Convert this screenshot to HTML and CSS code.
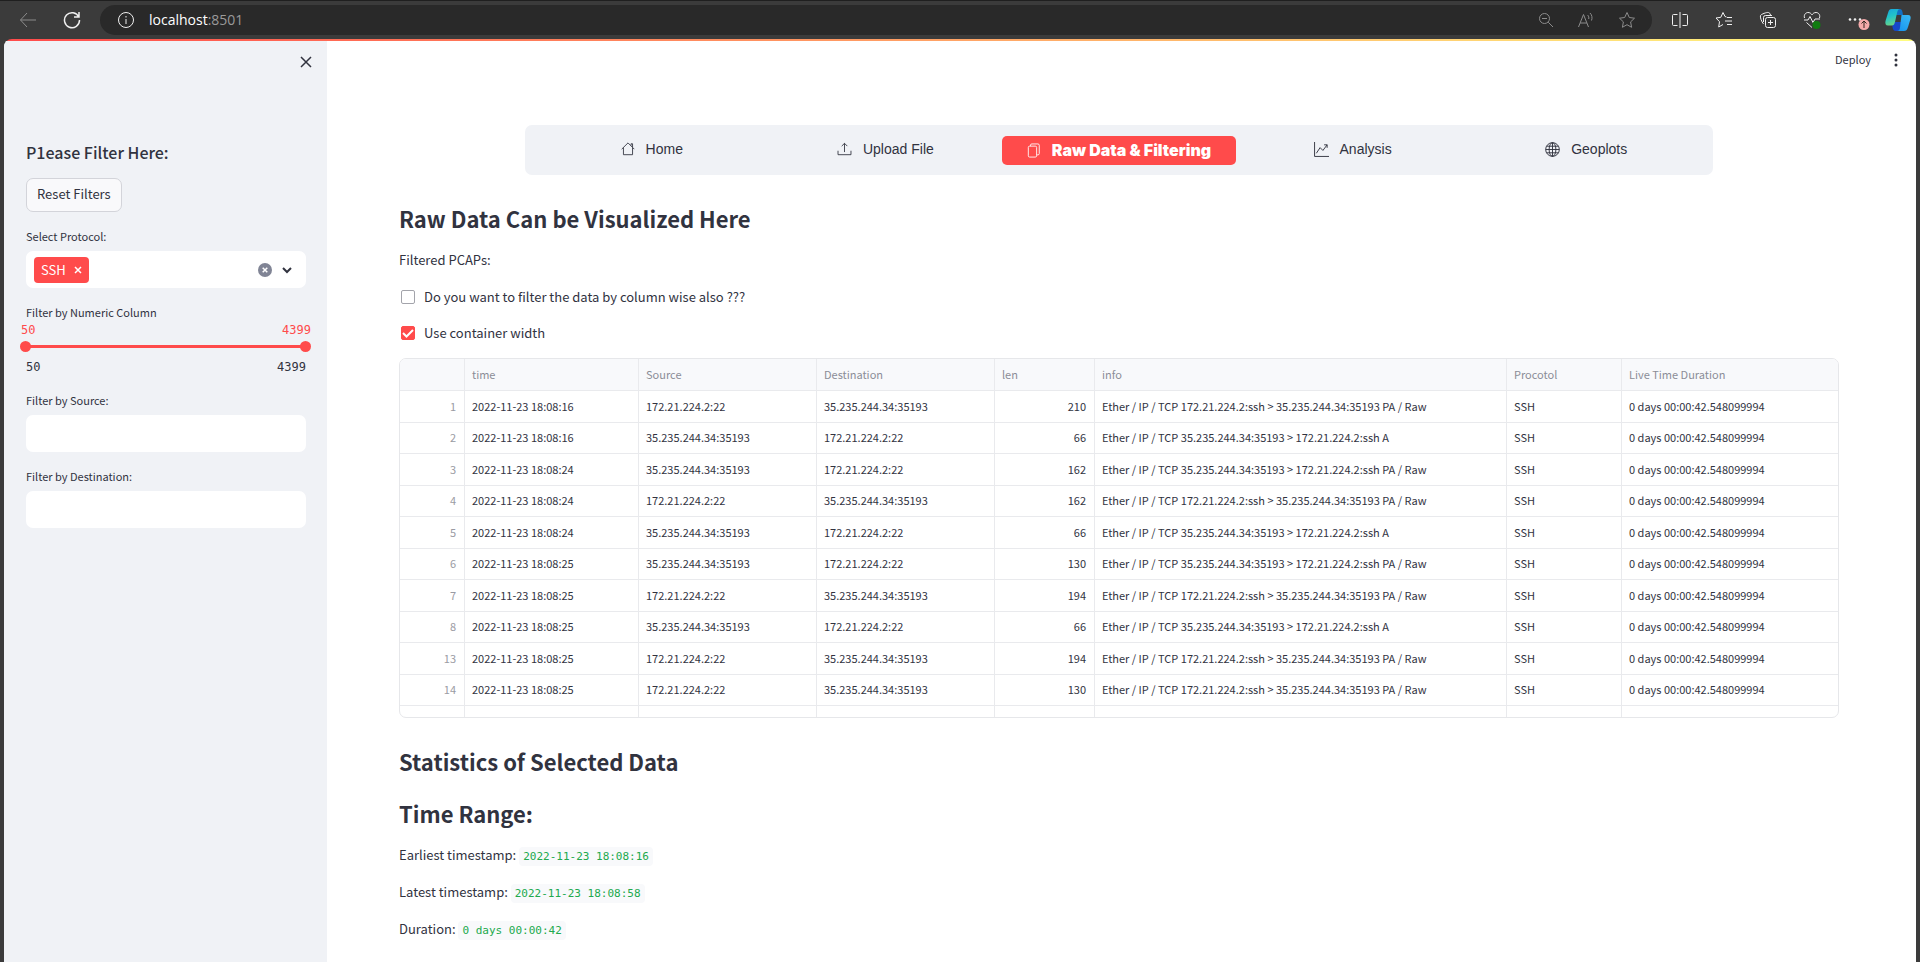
FILE: index.html
```html
<!DOCTYPE html>
<html lang="en">
<head>
<meta charset="utf-8">
<title>Raw Data &amp; Filtering</title>
<link rel="stylesheet" href="styles.css">
</head>
<body>
<header class="browser">
  <button class="tool dim" aria-label="Back"><svg width="18" height="18" viewBox="0 0 18 18"><path d="M17 9H1.500M8 2 1.500 9 8 16"/></svg></button>
  <button class="tool" aria-label="Refresh"><svg width="18" height="18" viewBox="0 0 18 18"><path class="bold" d="M15.800 6A7.500 7.500 0 1 0 16.500 9M16 1v5h-5"/></svg></button>
  <div class="address">
    <svg class="info" width="18" height="18" viewBox="0 0 18 18"><circle cx="9" cy="9" r="7.500"/><path d="M9 8v5M9 5v1.500"/></svg>
    <span class="url">localhost<span class="port">:8501</span></span>
    <button class="tool dim" aria-label="Zoom out"><svg width="16" height="16" viewBox="0 0 16 16"><circle cx="6.500" cy="6.500" r="5"/><path d="m10.200 10.200 4.800 4.800M4 6.500h5"/></svg></button>
    <button class="tool dim" aria-label="Read aloud"><svg width="18" height="18" viewBox="0 0 18 18"><path d="M1.500 16 6.500 3.500 11.500 16M3.200 12h6.600M10.500 4c1.200 1 1.600 2.500 1.200 4M13 2c2 1.800 2.500 5 1.500 7.500"/></svg></button>
    <button class="tool dim" aria-label="Add to favorites"><svg width="18" height="18" viewBox="0 0 18 18"><path d="m9 1.500 2.300 5 5.200.7-3.900 3.700 1 5.400L9 13.700l-4.600 2.600 1-5.400L1.500 7.200l5.200-.7z"/></svg></button>
  </div>
  <div class="tools">
    <button class="tool" aria-label="Split screen"><svg width="18" height="18" viewBox="0 0 18 18"><path d="M6.500 3.500h-4a1 1 0 0 0-1 1v9a1 1 0 0 0 1 1h4M11.500 3.500h4a1 1 0 0 1 1 1v9a1 1 0 0 1-1 1h-4M9 1v16"/></svg></button>
    <button class="tool" aria-label="Favorites"><svg width="18" height="18" viewBox="0 0 18 18"><path d="M11.500 6 10 5.500 8 1.500l-2.200 4.800-4.800.7 3.500 3.700-.8 5.300 4.300-2.500M12 6.500h5M10 10h7M12 13.500h5"/></svg></button>
    <button class="tool" aria-label="Collections"><svg width="18" height="18" viewBox="0 0 18 18"><rect x="6.500" y="6.500" width="10" height="10" rx="2"/><path d="M11.500 9v5M9 11.500h5M4.500 13C2.500 10.500.8 6 1.500 4.500c.3-1.200 6.500-3.500 8-3 1 .3 1.500 1 2 2.500M4.500 11V6.500a2 2 0 0 1 2-2H13"/></svg></button>
    <button class="tool" aria-label="Browser essentials"><svg width="18" height="18" viewBox="0 0 18 18"><path d="M1.500 7C.5 3.500 3 1.500 5 1.500c2 0 3 1 4 2.300 1-1.300 2-2.300 4-2.300 2.300 0 4.500 2 3.500 5.500M1 9h4l2-3.500 3 6L12 8h5M3.500 11.500 9 16.500"/><circle class="green" cx="13.500" cy="14" r="4"/></svg></button>
    <button class="tool" aria-label="Settings and more"><svg width="24" height="20" viewBox="0 0 24 20"><g class="solid"><circle cx="3" cy="9.500" r="1.300"/><circle cx="8" cy="9.500" r="1.300"/><circle cx="13" cy="9.500" r="1.300"/></g><circle class="pink" cx="17" cy="14.500" r="5.500"/><path class="arrow" d="M17 18v-7M14.500 13.500 17 11l2.500 2.500"/></svg></button>
    <button class="tool copilot" aria-label="Copilot"><svg width="26" height="24" viewBox="0 0 26 24">
      <defs><linearGradient id="ca" x1="0" y1="0" x2="0.300" y2="1"><stop offset="0" stop-color="#16a5e0"/><stop offset="0.500" stop-color="#22c3c8"/><stop offset="1" stop-color="#66d48b"/></linearGradient><linearGradient id="cb" x1="0" y1="1" x2="0.700" y2="0"><stop offset="0" stop-color="#1593ee"/><stop offset="1" stop-color="#36b5f5"/></linearGradient></defs>
      <path class="fill" fill="#1747c9" d="M7 14h10l-3 9h-3c-2.500 0-3-1.500-3.500-4z"/>
      <path class="fill" fill="#126fc4" d="M10 1h5c2 0 2.500 2 3 6h-8z"/>
      <path class="fill" fill="url(#ca)" d="M6.500 1H15c-2 0-2.500 2-3 4l-2 9c-.6 2.500-1.500 3.500-3 3.500H3c-2.500 0-3-2-2.500-4.500L3 5C3.800 2.500 4.500 1 6.500 1z"/>
      <path class="fill" fill="url(#cb)" d="M16.500 7H23c2.500 0 3 2 2.500 4L23 19c-1 3-2 4-4 4h-7c2 0 2.500-1.500 3-3.500z"/></svg></button>
  </div>
</header>

<div class="page">
  <aside class="sidebar">
    <button class="close" aria-label="Close sidebar"><svg width="12" height="12" viewBox="0 0 12 12"><path d="m1 1 10 10M11 1 1 11"/></svg></button>
    <h3 class="side-title">P1ease Filter Here:</h3>
    <button class="reset">Reset Filters</button>
    <div class="field">
      <span class="label" id="protocol">Select Protocol:</span>
      <div class="multi" role="group" aria-labelledby="protocol">
        <span class="tag">SSH <button aria-label="Remove SSH"><svg width="8" height="8" viewBox="0 0 8 8"><path d="m1 1 6 6M7 1 1 7"/></svg></button></span>
        <button class="clear" aria-label="Clear all"><svg width="14" height="14" viewBox="0 0 14 14"><circle cx="7" cy="7" r="7"/><path d="m4.700 4.700 4.600 4.600M9.300 4.700 4.700 9.300"/></svg></button>
        <button class="chev" aria-label="Open"><svg width="10" height="8" viewBox="0 0 10 8"><path d="m1 2 4 4 4-4"/></svg></button>
      </div>
    </div>
    <div class="field slider" role="group" aria-labelledby="numeric">
      <span class="label" id="numeric">Filter by Numeric Column</span>
      <div class="values current"><span>50</span><span>4399</span></div>
      <div class="track">
        <input type="range" min="50" max="4399" value="50" aria-label="Minimum">
        <input type="range" min="50" max="4399" value="4399" aria-label="Maximum">
      </div>
      <div class="values"><span>50</span><span>4399</span></div>
    </div>
    <div class="field">
      <label class="label" for="src">Filter by Source:</label>
      <input class="text" id="src" type="text">
    </div>
    <div class="field">
      <label class="label" for="dst">Filter by Destination:</label>
      <input class="text" id="dst" type="text">
    </div>
  </aside>

  <main class="main">
    <div class="topbar">
      <button class="deploy">Deploy</button>
      <button class="kebab" aria-label="Menu"><svg width="4" height="14" viewBox="0 0 4 14"><circle cx="2" cy="2" r="1.500"/><circle cx="2" cy="7" r="1.500"/><circle cx="2" cy="12" r="1.500"/></svg></button>
    </div>
    <div class="content">
      <nav class="nav">
        <a href="#"><svg width="14" height="14" viewBox="0 0 16 16"><path d="M.8 8.200 8 1l7.200 7.200M2.800 6.500v8h10.400v-8M11.500 4V2h1.700v4"/></svg>Home</a>
        <a href="#"><svg width="15" height="14" viewBox="0 0 16 16"><path d="M.6 10v4.500h14.800V10M8 11.500V1.500M4.800 4.700 8 1.500l3.200 3.200"/></svg>Upload File</a>
        <a href="#" class="active" aria-current="page"><svg width="14" height="15" viewBox="0 0 16 16"><rect x="1.500" y="3" width="9.500" height="12.500" rx="1.500"/><path d="M4 3V2A1.500 1.500 0 0 1 5.500.5h7A1.500 1.500 0 0 1 14 2v9.500a1.500 1.500 0 0 1-1.500 1.500H11"/></svg>Raw Data &amp; Filtering</a>
        <a href="#"><svg width="15" height="15" viewBox="0 0 16 16"><path d="M.6 0v15.400H16M2.500 12 6.500 6l3 3L14 3M10.800 3H14v3.200"/></svg>Analysis</a>
        <a href="#"><svg width="15" height="15" viewBox="0 0 16 16"><circle cx="8" cy="8" r="7.300"/><ellipse cx="8" cy="8" rx="3.600" ry="7.300"/><path d="M8 .7v14.600M.7 8h14.600M1.800 4.500h12.400M1.800 11.500h12.400"/></svg>Geoplots</a>
      </nav>
      <h2>Raw Data Can be Visualized Here</h2>
      <p>Filtered PCAPs:</p>
      <label class="check"><input type="checkbox">Do you want to filter the data by column wise also ???</label>
      <label class="check"><input type="checkbox" checked>Use container width</label>
      <div class="frame">
        <table>
          <colgroup><col class="c-idx"><col class="c-time"><col class="c-addr"><col class="c-addr"><col class="c-len"><col><col class="c-proto"><col class="c-live"></colgroup>
          <thead><tr><th></th><th>time</th><th>Source</th><th>Destination</th><th>len</th><th>info</th><th>Procotol</th><th>Live Time Duration</th></tr></thead>
          <tbody>
            <tr><td>1</td><td>2022-11-23 18:08:16</td><td>172.21.224.2:22</td><td>35.235.244.34:35193</td><td>210</td><td>Ether / IP / TCP 172.21.224.2:ssh &gt; 35.235.244.34:35193 PA / Raw</td><td>SSH</td><td>0 days 00:00:42.548099994</td></tr>
            <tr><td>2</td><td>2022-11-23 18:08:16</td><td>35.235.244.34:35193</td><td>172.21.224.2:22</td><td>66</td><td>Ether / IP / TCP 35.235.244.34:35193 &gt; 172.21.224.2:ssh A</td><td>SSH</td><td>0 days 00:00:42.548099994</td></tr>
            <tr><td>3</td><td>2022-11-23 18:08:24</td><td>35.235.244.34:35193</td><td>172.21.224.2:22</td><td>162</td><td>Ether / IP / TCP 35.235.244.34:35193 &gt; 172.21.224.2:ssh PA / Raw</td><td>SSH</td><td>0 days 00:00:42.548099994</td></tr>
            <tr><td>4</td><td>2022-11-23 18:08:24</td><td>172.21.224.2:22</td><td>35.235.244.34:35193</td><td>162</td><td>Ether / IP / TCP 172.21.224.2:ssh &gt; 35.235.244.34:35193 PA / Raw</td><td>SSH</td><td>0 days 00:00:42.548099994</td></tr>
            <tr><td>5</td><td>2022-11-23 18:08:24</td><td>35.235.244.34:35193</td><td>172.21.224.2:22</td><td>66</td><td>Ether / IP / TCP 35.235.244.34:35193 &gt; 172.21.224.2:ssh A</td><td>SSH</td><td>0 days 00:00:42.548099994</td></tr>
            <tr><td>6</td><td>2022-11-23 18:08:25</td><td>35.235.244.34:35193</td><td>172.21.224.2:22</td><td>130</td><td>Ether / IP / TCP 35.235.244.34:35193 &gt; 172.21.224.2:ssh PA / Raw</td><td>SSH</td><td>0 days 00:00:42.548099994</td></tr>
            <tr><td>7</td><td>2022-11-23 18:08:25</td><td>172.21.224.2:22</td><td>35.235.244.34:35193</td><td>194</td><td>Ether / IP / TCP 172.21.224.2:ssh &gt; 35.235.244.34:35193 PA / Raw</td><td>SSH</td><td>0 days 00:00:42.548099994</td></tr>
            <tr><td>8</td><td>2022-11-23 18:08:25</td><td>35.235.244.34:35193</td><td>172.21.224.2:22</td><td>66</td><td>Ether / IP / TCP 35.235.244.34:35193 &gt; 172.21.224.2:ssh A</td><td>SSH</td><td>0 days 00:00:42.548099994</td></tr>
            <tr><td>13</td><td>2022-11-23 18:08:25</td><td>172.21.224.2:22</td><td>35.235.244.34:35193</td><td>194</td><td>Ether / IP / TCP 172.21.224.2:ssh &gt; 35.235.244.34:35193 PA / Raw</td><td>SSH</td><td>0 days 00:00:42.548099994</td></tr>
            <tr><td>14</td><td>2022-11-23 18:08:25</td><td>172.21.224.2:22</td><td>35.235.244.34:35193</td><td>130</td><td>Ether / IP / TCP 172.21.224.2:ssh &gt; 35.235.244.34:35193 PA / Raw</td><td>SSH</td><td>0 days 00:00:42.548099994</td></tr>
            <tr class="rest"><td></td><td></td><td></td><td></td><td></td><td></td><td></td><td></td></tr>
          </tbody>
        </table>
      </div>
      <h2>Statistics of Selected Data</h2>
      <h2 class="sub">Time Range:</h2>
      <p>Earliest timestamp: <code>2022-11-23 18:08:16</code></p>
      <p>Latest timestamp: <code>2022-11-23 18:08:58</code></p>
      <p>Duration: <code>0 days 00:00:42</code></p>
    </div>
  </main>
</div>
</body>
</html>
```
FILE: styles.css
```css
* { box-sizing: border-box; }
body {
  margin: 0;
  min-height: 100vh;
  display: flex;
  flex-direction: column;
  background: #3b3b3b;
  color: #31333f;
  font: 13px/24px "Noto Sans CJK SC", "Noto Sans", sans-serif;
}
button { border: 0; padding: 0; background: none; color: inherit; font: inherit; }
svg { display: block; fill: none; stroke: currentColor; }
h2, h3, p { margin: 0; }

/* browser toolbar */
.browser {
  display: flex;
  align-items: center;
  height: 39px;
  padding: 0 9px 0 19px;
  border-top: 1px solid #1f1f1f;
  color: #f0f0f0;
}
.browser .tool { flex: none; }
.browser .tool + .tool { margin-left: 26px; }
.browser .dim { color: #8c8c8c; }
.browser .bold { stroke-width: 1.5; }
.address {
  flex: 1;
  display: flex;
  align-items: center;
  height: 30px;
  margin: 0 19px 0 19px;
  padding: 0 16px 0 17px;
  border-radius: 15px;
  background: #292929;
}
.address .tool + .tool { margin-left: 23px; }
.url { flex: 1; margin-left: 14px; font: 14px/24px "Open Sans", "Noto Sans", sans-serif; color: #fff; }
.port { color: #9a9a9a; }
.tools { display: flex; align-items: center; }
.tools .copilot.copilot { margin-left: 14px; }
.green { fill: #107c10; stroke: none; }
.solid { fill: #f0f0f0; stroke: none; }
.pink { fill: #f4a9a9; stroke: none; }
.arrow { stroke: #33261f; }
.fill { stroke: none; }

/* page surface */
.page {
  flex: 1;
  display: flex;
  margin: 0 4px;
  border-radius: 8px 8px 0 0;
  overflow: hidden;
  background: linear-gradient(90deg, #ff4b4b, #fffd80) top / 100% 2px no-repeat #fff;
}

/* sidebar */
.sidebar {
  width: 323px;
  margin-top: 2px;
  padding: 15px 21px 0 22px;
  background: #f0f2f6;
}
.close { display: block; margin: 0 -6px 0 auto; }
.close svg { stroke-width: 1.5; }
.side-title { margin: 72px 0 14px; font-size: 16px; line-height: 24px; font-weight: 500; }
.reset {
  display: block;
  height: 34px;
  padding: 0 10px 2px;
  border: 1px solid #d3d4da;
  border-radius: 7px;
  background: #f9f9fb;
}
.field { margin-top: 15px; }
.label { display: block; margin-bottom: 6px; font-size: 11px; line-height: 18px; }
.multi {
  display: flex;
  align-items: center;
  height: 37px;
  padding: 0 14px 0 8px;
  border-radius: 7px;
  background: #fff;
}
.tag {
  display: flex;
  align-items: center;
  gap: 8px;
  height: 26px;
  padding: 0 7px;
  margin-right: auto;
  border-radius: 4px;
  background: #ff4b4b;
  color: #fff;
}
.tag svg { stroke-width: 1.5; }
.clear circle { fill: #808495; stroke: none; }
.clear path { stroke: #fff; stroke-width: 1.5; }
.chev { margin-left: 10px; }
.chev svg { stroke-width: 2; }
.slider .label { margin: 0; }
.values {
  display: flex;
  justify-content: space-between;
  font: 12px/18px "DejaVu Sans Mono", monospace;
}
.values.current { margin: 0 -5px; color: #ff4b4b; }
.track {
  position: relative;
  height: 14px;
  margin-bottom: 5px;
  background: linear-gradient(#ff4b4b, #ff4b4b) center / 100% 3px no-repeat;
}
.track input {
  position: absolute;
  inset: 0 -5px 0 -6px;
  margin: 0;
  appearance: none;
  background: none;
  pointer-events: none;
}
.track input::-webkit-slider-thumb {
  appearance: none;
  width: 11px;
  height: 11px;
  border-radius: 50%;
  background: #ff4b4b;
  pointer-events: auto;
}
.text {
  display: block;
  width: 100%;
  height: 37px;
  padding: 0 10px;
  border: 0;
  border-radius: 7px;
  background: #fff;
  font: inherit;
}

/* main column */
.main { flex: 1; min-width: 0; }
.topbar {
  display: flex;
  justify-content: flex-end;
  align-items: center;
  gap: 23px;
  height: 42px;
  padding-right: 18px;
}
.deploy { padding-bottom: 2px; font-size: 11px; }
.kebab svg { fill: currentColor; stroke: none; }
.content { padding: 44px 77px 20px 72px; }
.nav {
  display: grid;
  grid-template-columns: repeat(5, 1fr);
  width: 82.5%;
  min-width: 820px;
  margin: 0 auto;
  padding: 11px 10px 10px;
  border-radius: 7px;
  background: #f0f2f6;
}
.nav a {
  display: flex;
  justify-content: center;
  align-items: center;
  gap: 11px;
  height: 29px;
  padding-bottom: 3px;
  border-radius: 5px;
  color: #31333f;
  font: 14px/20px "Liberation Sans", sans-serif;
  text-decoration: none;
}
.nav .active { padding-bottom: 1px; background: #ff4b4b; color: #fff; font: 900 16px/20px Inter, sans-serif; }
h2 { margin-top: 28px; font-size: 22px; line-height: 30px; font-weight: 700; }
h2.sub { margin-top: 22px; }
h2 + p { margin-top: 15px; }
p { margin-top: 13px; }
.check { display: flex; align-items: center; gap: 9px; margin-top: 13px; }
.check + .check { margin-top: 12px; }
.check input {
  appearance: none;
  width: 14px;
  height: 14px;
  margin: 0 0 0 2px;
  border: 1px solid #a3a4ab;
  border-radius: 2px;
}
.check input:checked {
  border-color: #ff4b4b;
  background: #ff4b4b url("data:image/svg+xml,%3Csvg xmlns='http://www.w3.org/2000/svg' viewBox='0 0 14 14'%3E%3Cpath d='M2 7l3.500 3.500L12 4' fill='none' stroke='white' stroke-width='2'/%3E%3C/svg%3E") center / 14px no-repeat;
}
.frame {
  margin-top: 13px;
  overflow: hidden;
  border: 1px solid #e6e7ea;
  border-radius: 7px;
}
table { width: 100%; table-layout: fixed; border-collapse: separate; border-spacing: 0; font-size: 11px; line-height: 20px; }
.c-idx { width: 65px; }
.c-time { width: 174px; }
.c-addr { width: 178px; }
.c-len { width: 100px; }
.c-proto { width: 115px; }
.c-live { width: 216px; }
th, td {
  height: 31px;
  padding: 0 8px 2px 7px;
  border: solid #e9eaed;
  border-width: 0 1px 1px 0;
  text-align: left;
  white-space: nowrap;
  overflow: hidden;
}
th { height: 32px; background: #f8f9fb; color: #8b8d97; font-weight: 400; }
tbody tr:nth-child(odd) td { height: 32px; }
td:first-child { text-align: right; color: #9a9ba3; }
td:nth-child(5) { text-align: right; }
th:last-child, td:last-child { border-right: 0; }
tbody .rest.rest td { height: 11px; padding: 0; border-bottom: 0; }
code {
  padding: 3px 4px;
  border-radius: 4px;
  background: #f8f9fb;
  color: #21a94d;
  font: 11px/12px "DejaVu Sans Mono", monospace;
}
```
